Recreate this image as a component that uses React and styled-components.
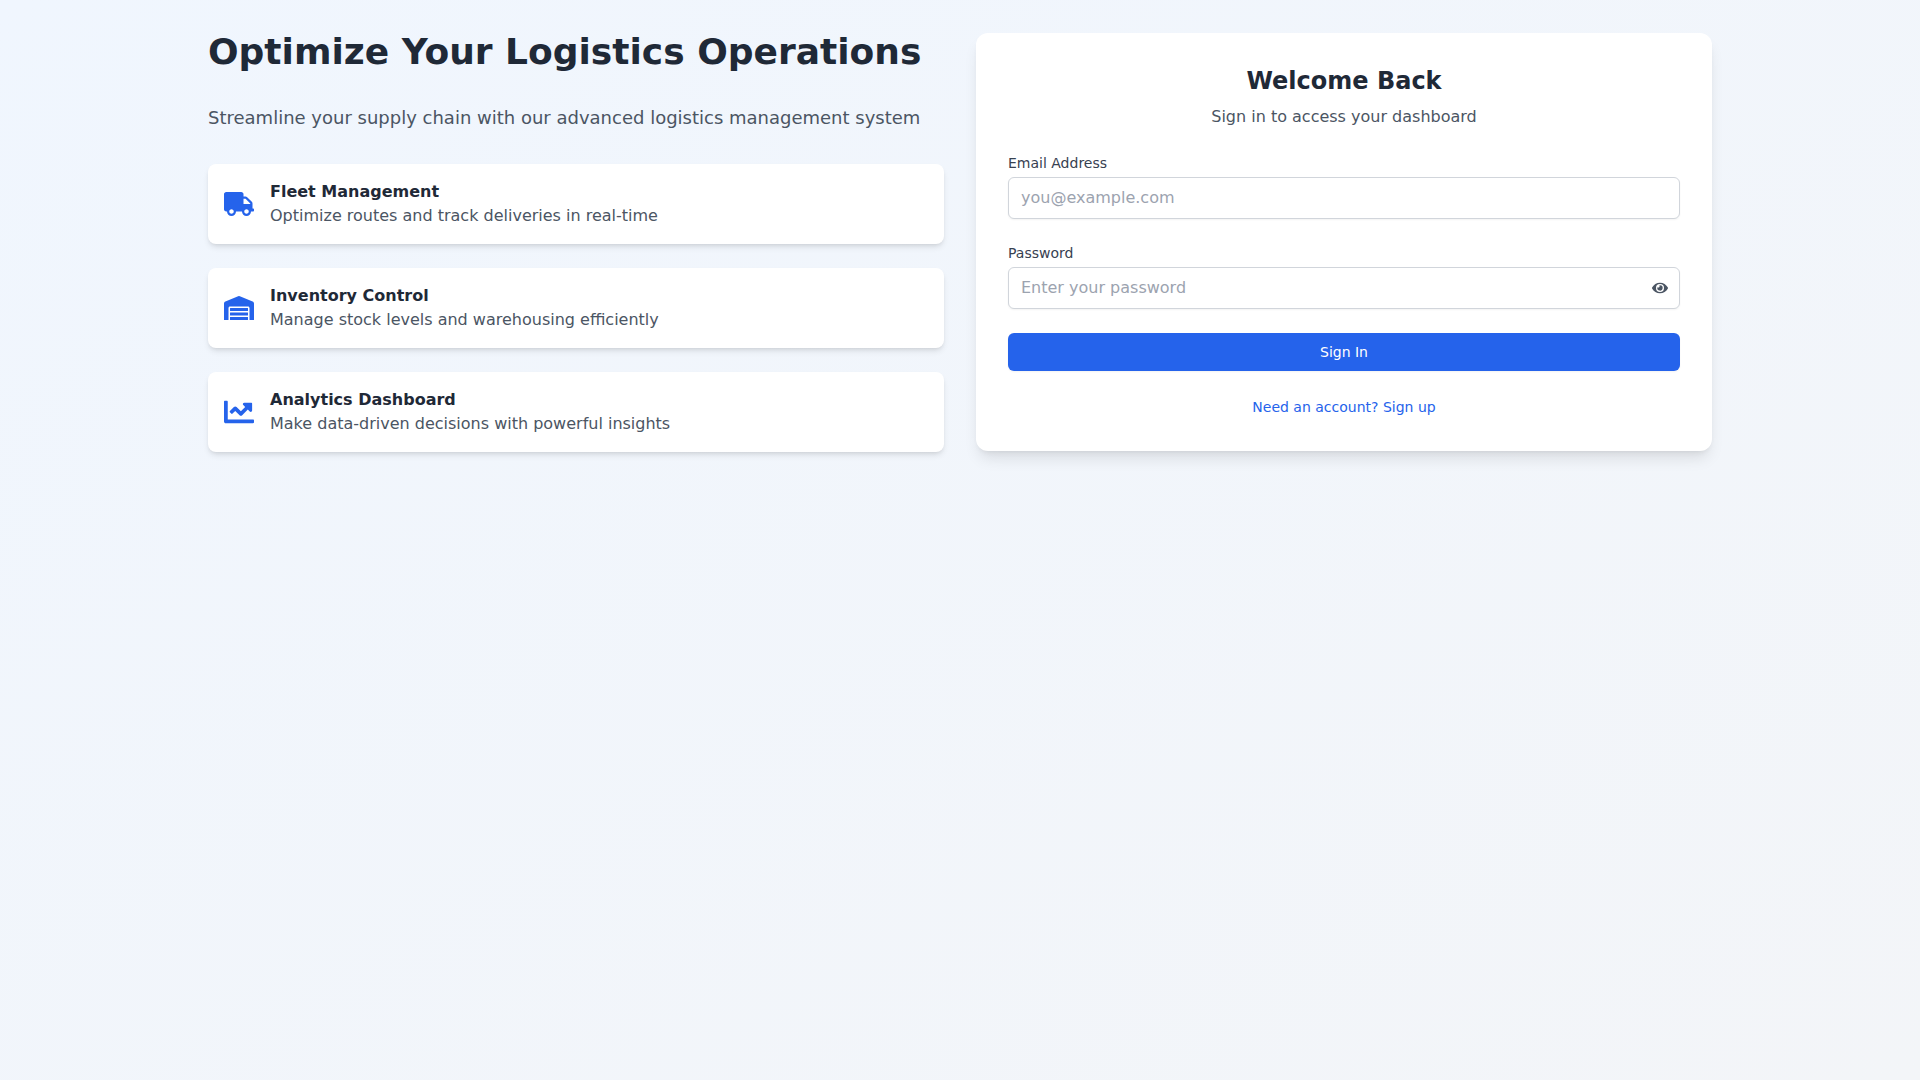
import React, { useState } from 'react';
import styled, { createGlobalStyle } from 'styled-components';
import { FaTruck, FaWarehouse, FaChartLine, FaEye, FaEyeSlash } from 'react-icons/fa';

const GlobalStyle = createGlobalStyle`
  *, *::before, *::after {
    box-sizing: border-box;
  }

  body, h1, h2, h3, p, ul {
    margin: 0;
    padding: 0;
  }

  body {
    font-family: "DejaVu Sans", sans-serif;
    font-size: 16px;
    line-height: 24px;
    color: #1f2937;
  }

  button, input {
    font-family: inherit;
  }
`;

const Page = styled.main`
  min-height: 100vh;
  background: linear-gradient(to bottom right, #f0f6fe, #f3f5f8);
`;

const Container = styled.div`
  display: grid;
  grid-template-columns: 1fr 1fr;
  align-items: center;
  gap: 32px;
  width: 100%;
  max-width: 1536px;
  margin: 0 auto;
  padding: 32px 16px;

  @media (max-width: 1023px) {
    grid-template-columns: 1fr;
  }
`;

const Intro = styled.section`
  display: flex;
  flex-direction: column;
  gap: 32px;
`;

const Title = styled.h1`
  font-size: 36px;
  line-height: 40px;
  font-weight: 700;
`;

const Lead = styled.p`
  font-size: 18px;
  line-height: 28px;
  color: #4b5563;
`;

const FeatureList = styled.ul`
  display: flex;
  flex-direction: column;
  gap: 24px;
  list-style: none;
`;

const Feature = styled.li`
  display: flex;
  align-items: center;
  gap: 16px;
  padding: 16px;
  background: #ffffff;
  border-radius: 8px;
  box-shadow: 0 4px 6px -1px rgba(0, 0, 0, 0.1), 0 2px 4px -2px rgba(0, 0, 0, 0.1);

  svg {
    flex-shrink: 0;
    font-size: 30px;
    color: #2563eb;
  }
`;

const FeatureTitle = styled.h3`
  font-size: 16px;
  line-height: 24px;
  font-weight: 600;
`;

const Muted = styled.p`
  color: #4b5563;
`;

const Card = styled.section`
  padding: 32px;
  background: #ffffff;
  border-radius: 12px;
  box-shadow: 0 10px 15px -3px rgba(0, 0, 0, 0.1), 0 4px 6px -4px rgba(0, 0, 0, 0.1);
`;

const CardHeader = styled.header`
  display: flex;
  flex-direction: column;
  gap: 8px;
  margin-bottom: 24px;
  text-align: center;
`;

const CardTitle = styled.h2`
  font-size: 24px;
  line-height: 32px;
  font-weight: 700;
`;

const Form = styled.form`
  display: flex;
  flex-direction: column;
  gap: 24px;
`;

const Field = styled.div`
  display: flex;
  flex-direction: column;
  gap: 4px;
`;

const Label = styled.label`
  font-size: 14px;
  line-height: 20px;
  font-weight: 500;
  color: #374151;
`;

const InputWrap = styled.div`
  position: relative;
  display: flex;
`;

const Input = styled.input`
  width: 100%;
  padding: 8px ${({ $withIcon }) => ($withIcon ? '40px' : '12px')} 8px 12px;
  border: 1px solid #d1d5db;
  border-radius: 6px;
  background: #ffffff;
  box-shadow: 0 1px 2px 0 rgba(0, 0, 0, 0.05);
  font-size: 16px;
  line-height: 24px;
  color: #1f2937;

  &::placeholder {
    color: #9ca3af;
    opacity: 1;
  }

  &:focus {
    outline: 2px solid #3b82f6;
  }
`;

const ToggleButton = styled.button`
  position: absolute;
  top: 0;
  bottom: 0;
  right: 0;
  display: flex;
  align-items: center;
  padding: 0 12px;
  border: none;
  background: none;
  font-size: 16px;
  color: #4b5563;
  cursor: pointer;
`;

const SubmitButton = styled.button`
  padding: 8px 16px;
  border: 1px solid transparent;
  border-radius: 6px;
  background: #2563eb;
  box-shadow: 0 1px 2px 0 rgba(0, 0, 0, 0.05);
  font-size: 14px;
  line-height: 20px;
  font-weight: 500;
  color: #ffffff;
  cursor: pointer;

  &:hover {
    background: #1d4ed8;
  }
`;

const CardFooter = styled.div`
  margin-top: 24px;
  text-align: center;
`;

const SignUpLink = styled.a`
  font-size: 14px;
  color: #2563eb;
  text-decoration: none;

  &:hover {
    color: #1d4ed8;
  }
`;

const features = [
  {
    icon: FaTruck,
    title: 'Fleet Management',
    text: 'Optimize routes and track deliveries in real-time',
  },
  {
    icon: FaWarehouse,
    title: 'Inventory Control',
    text: 'Manage stock levels and warehousing efficiently',
  },
  {
    icon: FaChartLine,
    title: 'Analytics Dashboard',
    text: 'Make data-driven decisions with powerful insights',
  },
];

const LoginCard = () => {
  const [showPassword, setShowPassword] = useState(false);

  return (
    <Card>
      <CardHeader>
        <CardTitle>Welcome Back</CardTitle>
        <Muted>Sign in to access your dashboard</Muted>
      </CardHeader>
      <Form onSubmit={(e) => e.preventDefault()}>
        <Field>
          <Label htmlFor="email">Email Address</Label>
          <Input id="email" type="email" placeholder="you@example.com" />
        </Field>
        <Field>
          <Label htmlFor="password">Password</Label>
          <InputWrap>
            <Input
              id="password"
              type={showPassword ? 'text' : 'password'}
              placeholder="Enter your password"
              $withIcon
            />
            <ToggleButton
              type="button"
              aria-label={showPassword ? 'Hide password' : 'Show password'}
              onClick={() => setShowPassword(!showPassword)}
            >
              {showPassword ? <FaEyeSlash /> : <FaEye />}
            </ToggleButton>
          </InputWrap>
        </Field>
        <SubmitButton type="submit">Sign In</SubmitButton>
      </Form>
      <CardFooter>
        <SignUpLink href="#signup">Need an account? Sign up</SignUpLink>
      </CardFooter>
    </Card>
  );
};

const App = () => {
  return (
    <>
      <GlobalStyle />
      <Page>
        <Container>
          <Intro>
            <Title>Optimize Your Logistics Operations</Title>
            <Lead>Streamline your supply chain with our advanced logistics management system</Lead>
            <FeatureList>
              {features.map(({ icon: Icon, title, text }) => (
                <Feature key={title}>
                  <Icon />
                  <div>
                    <FeatureTitle>{title}</FeatureTitle>
                    <Muted>{text}</Muted>
                  </div>
                </Feature>
              ))}
            </FeatureList>
          </Intro>
          <LoginCard />
        </Container>
      </Page>
    </>
  );
};

export default App;
